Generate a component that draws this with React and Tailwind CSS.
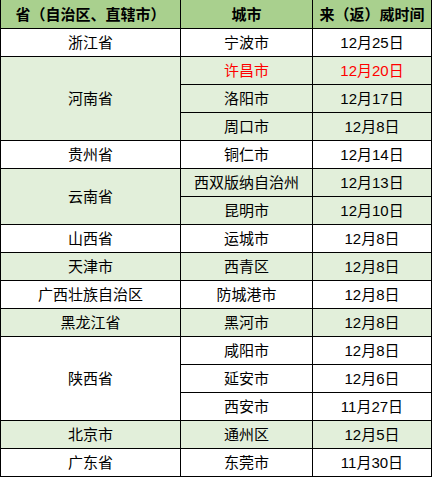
import React from "react";

const G = "bg-[#e2efda]";
const W = "bg-white";

const rows = [
  { p: "浙江省", span: 1, bg: W, items: [["宁波市", "12月25日"]] },
  { p: "河南省", span: 3, bg: G, items: [["许昌市", "12月20日", true], ["洛阳市", "12月17日"], ["周口市", "12月8日"]] },
  { p: "贵州省", span: 1, bg: W, items: [["铜仁市", "12月14日"]] },
  { p: "云南省", span: 2, bg: G, items: [["西双版纳自治州", "12月13日"], ["昆明市", "12月10日"]] },
  { p: "山西省", span: 1, bg: W, items: [["运城市", "12月8日"]] },
  { p: "天津市", span: 1, bg: G, items: [["西青区", "12月8日"]] },
  { p: "广西壮族自治区", span: 1, bg: W, items: [["防城港市", "12月8日"]] },
  { p: "黑龙江省", span: 1, bg: G, items: [["黑河市", "12月8日"]] },
  { p: "陕西省", span: 3, bg: W, items: [["咸阳市", "12月8日"], ["延安市", "12月6日"], ["西安市", "11月27日"]] },
  { p: "北京市", span: 1, bg: G, items: [["通州区", "12月5日"]] },
  { p: "广东省", span: 1, bg: W, items: [["东莞市", "11月30日"]] },
];

const spanCls = { 1: "row-span-1", 2: "row-span-2", 3: "row-span-3" };

export default function App() {
  const cells = [];
  rows.forEach((r, i) => {
    cells.push(
      <div key={"p" + i} className={`${r.bg} ${spanCls[r.span]} flex items-center justify-center`}>
        {r.p}
      </div>
    );
    r.items.forEach((it, j) => {
      const color = it[2] ? "text-[#ff0000]" : "text-black";
      cells.push(
        <div key={`c${i}-${j}`} className={`${r.bg} ${color} flex items-center justify-center`}>
          {it[0]}
        </div>
      );
      cells.push(
        <div key={`d${i}-${j}`} className={`${r.bg} ${color} flex items-center justify-center`}>
          {it[1]}
        </div>
      );
    });
  });

  return (
    <div
      className="w-[432px] h-[477px] bg-black px-px pb-px grid grid-cols-[179px_131px_118px] grid-rows-[28px_repeat(16,27px)] gap-px text-[15px] leading-none text-black"
      style={{ fontFamily: '"Liberation Sans", "Noto Sans CJK SC", sans-serif' }}
    >
      <div className="bg-[#a9d08e] flex items-center justify-center font-bold">省（自治区、直辖市）</div>
      <div className="bg-[#a9d08e] flex items-center justify-center font-bold">城市</div>
      <div className="bg-[#a9d08e] flex items-center justify-center font-bold">来（返）威时间</div>
      {cells}
    </div>
  );
}
